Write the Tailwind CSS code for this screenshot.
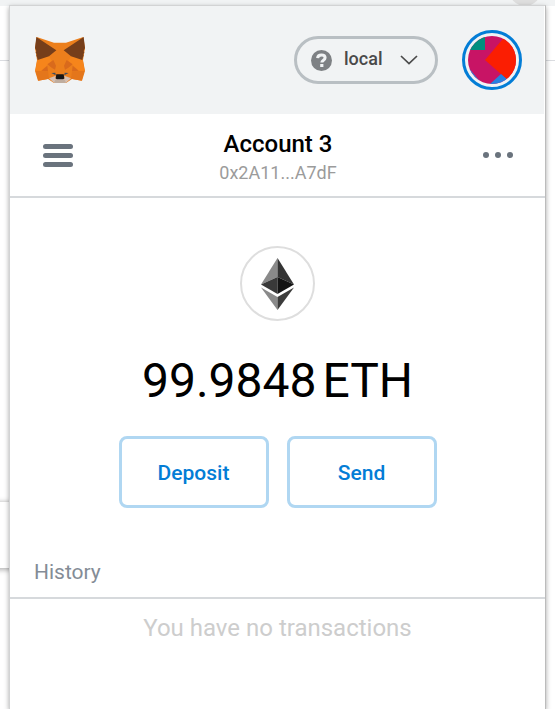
<!DOCTYPE html>
<html lang="en">
<head>
<meta charset="utf-8">
<meta name="viewport" content="width=device-width, initial-scale=1">
<title>MetaMask</title>
<script src="https://cdn.jsdelivr.net/npm/@tailwindcss/browser@4"></script>
</head>
<body class="relative min-h-screen overflow-hidden bg-white font-['Roboto',sans-serif]">
<!-- Browser page behind the popup -->
<div class="absolute inset-0" aria-hidden="true">
  <div class="h-[6px] bg-[#f1f3f4]"></div>
  <div class="h-[55px] border-b border-[#dadce0]"></div>
  <div class="absolute -top-[26px] right-[14px] size-8 rounded-full bg-[#dedede]"></div>
  <div class="absolute top-[502px] -left-10 h-[66px] w-20 bg-white shadow-[0_1px_5px_1px_rgba(0,0,0,0.3)]"></div>
</div>

<main class="relative mt-[5px] mr-[9px] ml-[9px] flex min-h-[calc(100vh-5px)] flex-col border border-b-0 border-[#d2d3d4] border-r-[#bcbcbc] bg-white shadow-[0_2px_5px_rgba(0,0,0,0.35)]">
  <header class="mr-px flex h-[108px] items-center bg-[#f1f3f4] pr-[22px] pl-[25px]">
    <a href="#" aria-label="MetaMask home">
      <svg class="h-12 w-[50px]" viewBox="45 33 150 144" aria-hidden="true">
        <path fill="#ec7f1c" d="M50 36 102 53h36L190 36l5 34-6 35 6 33-9 29-30-5-18 12h-36l-18-12-30 5-9-29 6-33-6-35z"/>
        <path fill="#f6851b" d="M52 104 86 92 104 122l-22-2-18 17H46zM188 104l-34-12-18 30 22-2 18 17h18z"/>
        <path fill="#763e1a" d="m49 36 60 40-22 18-34 11-2-9-2-4 1-5-3-4 2-5-4-9zM191 36l-60 40 22 18 34 11 2-9 2-4-1-5 3-4-2-5 4-9z"/>
        <path fill="#d96a1c" d="m82 118 18-13 8 17-3 12-10-6zM158 118l-18-13-8 17 3 12 10-6zM64 137l18-15 2 17zM176 137l-18-15-2 17z"/>
        <path fill="#e4761b" d="m47 138 37 1 3 22-32 6zM193 138l-37 1-3 22 32 6z"/>
        <path fill="#d5bfb2" d="m87 160 20-8v10h26v-10l20 8-15 13h-36z"/>
        <path fill="#c0ad9e" d="M106 164h28l3 7-3 3h-28l-3-3z"/>
        <path fill="#161616" d="m109 148-2 12 3 3h20l3-3-2-12z"/>
        <path fill="#3c4c61" d="m94 144 12-1 1 8zM146 144l-12-1-1 8z"/>
      </svg>
    </a>
    <button type="button" class="ml-auto flex h-12 w-36 items-center rounded-full border-3 border-[#b9bfc3] pr-[17px] pl-[14px] text-[#4a4a4a]">
      <svg class="size-[21px]" viewBox="0 0 21 21" aria-hidden="true">
        <circle cx="10.5" cy="10.5" r="10.5" fill="#7e8184"/>
        <path d="M6.6 8.1C6.8 6 8.3 5 10.5 5s3.6 1.1 3.6 2.8c0 2.4-3.3 2.3-3.3 4.7" fill="none" stroke="#f1f3f4" stroke-width="3"/>
        <path d="M9.2 14h3.2v3H9.2z" fill="#f1f3f4"/>
      </svg>
      <span class="ml-3 pb-[2px] text-[18px] leading-6 font-medium">local</span>
      <svg class="ml-auto h-[10px] w-[18px]" viewBox="0 0 18 10" fill="none" stroke="#4a4a4a" stroke-width="1.7" aria-hidden="true"><path d="m1 1 8 7.5L17 1"/></svg>
    </button>
    <button type="button" aria-label="Account menu" class="ml-6 size-[60px] rounded-full border-3 border-[#037dd6] p-[3px]">
      <svg class="size-12" viewBox="0 0 48 48" aria-hidden="true">
        <defs><clipPath id="avatar"><circle cx="24" cy="24" r="24"/></clipPath></defs>
        <g clip-path="url(#avatar)">
          <path fill="#c81465" d="M0 0h48v48H0z"/>
          <path fill="#018e7e" d="M0-1h17v15H0z"/>
          <path fill="#fb1e02" d="M17 24 39-2l20 24-17 24z"/>
          <path fill="#2781e1" d="m22 48 11-10 8 7-8 5zM0 31l14 17H0z"/>
        </g>
      </svg>
    </button>
  </header>

  <section class="flex h-21 items-center justify-between border-b-2 border-[#d6d9dc] pr-8 pl-[33px]">
    <button type="button" aria-label="Menu" class="flex w-[30px] flex-col gap-1">
      <span class="h-[5px] rounded-full bg-[#6a737d]"></span>
      <span class="h-[5px] rounded-full bg-[#6a737d]"></span>
      <span class="h-[5px] rounded-full bg-[#6a737d]"></span>
    </button>
    <div class="pt-1 text-center">
      <h1 class="text-2xl leading-8 font-medium text-black">Account 3</h1>
      <p class="text-[18px] leading-[26px] text-[#9b9b9b]">0x2A11...A7dF</p>
    </div>
    <button type="button" aria-label="Account options" class="flex w-[30px] justify-between">
      <span class="size-[6px] rounded-full bg-[#6a737d]"></span>
      <span class="size-[6px] rounded-full bg-[#6a737d]"></span>
      <span class="size-[6px] rounded-full bg-[#6a737d]"></span>
    </button>
  </section>

  <section class="flex flex-col items-center pt-12">
    <div class="flex size-[75px] items-center justify-center rounded-full border-2 border-[#dedede]">
      <svg class="h-[52px] w-[33px]" viewBox="0 0 33 52" role="img" aria-label="Ethereum">
        <path fill="#8a8a8a" d="M16.5 0v19L0 26.5z"/>
        <path fill="#343434" d="M16.5 0v19L33 26.5z"/>
        <path fill="#393939" d="M16.5 19v17L0 26.5z"/>
        <path fill="#141414" d="M16.5 19v17L33 26.5z"/>
        <path fill="#8a8a8a" d="M0 29.5 16.5 39v13z"/>
        <path fill="#3c3c3b" d="M33 29.5 16.5 39v13z"/>
      </svg>
    </div>
    <p class="mt-8 flex gap-[6px] text-5xl leading-14 text-black"><span>99.9848</span><span>ETH</span></p>
    <div class="mt-[27px] flex gap-[18px]">
      <button type="button" class="h-18 w-[150px] rounded-lg border-3 border-[#b0d7f2] pt-1 text-[21px] font-medium text-[#037dd6]">Deposit</button>
      <button type="button" class="h-18 w-[150px] rounded-lg border-3 border-[#b0d7f2] pt-1 text-[21px] font-medium text-[#037dd6]">Send</button>
    </div>
  </section>

  <section class="mt-12">
    <h2 class="border-b-2 border-[#d6d9dc] px-6 pb-[9px] text-[21px] leading-8 text-[#848c96]">History</h2>
    <p class="pt-[13px] text-center text-2xl leading-8 text-[#cdcdcd]">You have no transactions</p>
  </section>
</main>
</body>
</html>
